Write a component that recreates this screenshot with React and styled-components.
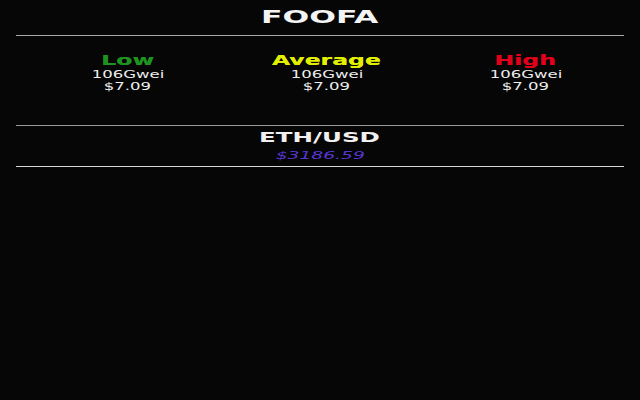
import React from "react";
import styled, { createGlobalStyle } from "styled-components";

const Global = createGlobalStyle`
  html, body { margin: 0; padding: 0; background: #060606; }
  body { font-family: "DejaVu Sans", "Liberation Sans", sans-serif; color: #f2f2f2; }
`;

const Page = styled.div`
  width: 640px;
  height: 400px;
  padding: 0 16px;
  box-sizing: border-box;
  background: #060606;
`;

const Stretch = styled.span`
  display: inline-block;
  transform: scaleX(${(p) => p.$sx || 1.7});
  transform-origin: center;
  white-space: nowrap;
`;

const Title = styled.div`
  text-align: center;
  font-weight: bold;
  font-size: 17px;
  line-height: 35px;
  color: #f4f4f4;
`;

const Rule = styled.div`
  height: 1px;
  background: ${(p) => p.$c || "#a8a8a8"};
`;

const GasRow = styled.div`
  display: grid;
  grid-template-columns: repeat(3, 199px);
  padding: 16px 0 32px 12px;
`;

const GasCol = styled.div`
  display: flex;
  flex-direction: column;
  align-items: center;
`;

const Level = styled.div`
  font-weight: bold;
  font-size: 14px;
  line-height: 17px;
  color: ${(p) => p.$c};
  text-shadow: 0 0 0.4px ${(p) => p.$c};
`;

const Small = styled.div`
  font-size: 10px;
  line-height: 12px;
  color: #ededed;
`;

const Pair = styled.div`
  text-align: center;
  font-weight: bold;
  font-size: 14px;
  line-height: 22px;
  color: #f0f0f0;
`;

const Price = styled.div`
  text-align: center;
  font-style: italic;
  font-size: 11px;
  line-height: 14px;
  color: #5636d2;
  padding-top: 1px;
  margin-bottom: 3px;
`;

const levels = [
  { name: "Low", color: "#1f931f" },
  { name: "Average", color: "#e2f000" },
  { name: "High", color: "#e0001a" },
];

export default function App() {
  return (
    <Page>
      <Global />
      <Title><Stretch $sx={1.85}>FOOFA</Stretch></Title>
      <Rule />
      <GasRow>
        {levels.map((l) => (
          <GasCol key={l.name}>
            <Level $c={l.color}><Stretch $sx={1.68}>{l.name}</Stretch></Level>
            <Small><Stretch $sx={1.65}>106Gwei</Stretch></Small>
            <Small><Stretch $sx={1.65}>$7.09</Stretch></Small>
          </GasCol>
        ))}
      </GasRow>
      <Rule $c="#9a9a9a" />
      <Pair><Stretch $sx={1.75}>ETH/USD</Stretch></Pair>
      <Price><Stretch $sx={1.7}>$3186.59</Stretch></Price>
      <Rule $c="#d8d8d8" />
    </Page>
  );
}
